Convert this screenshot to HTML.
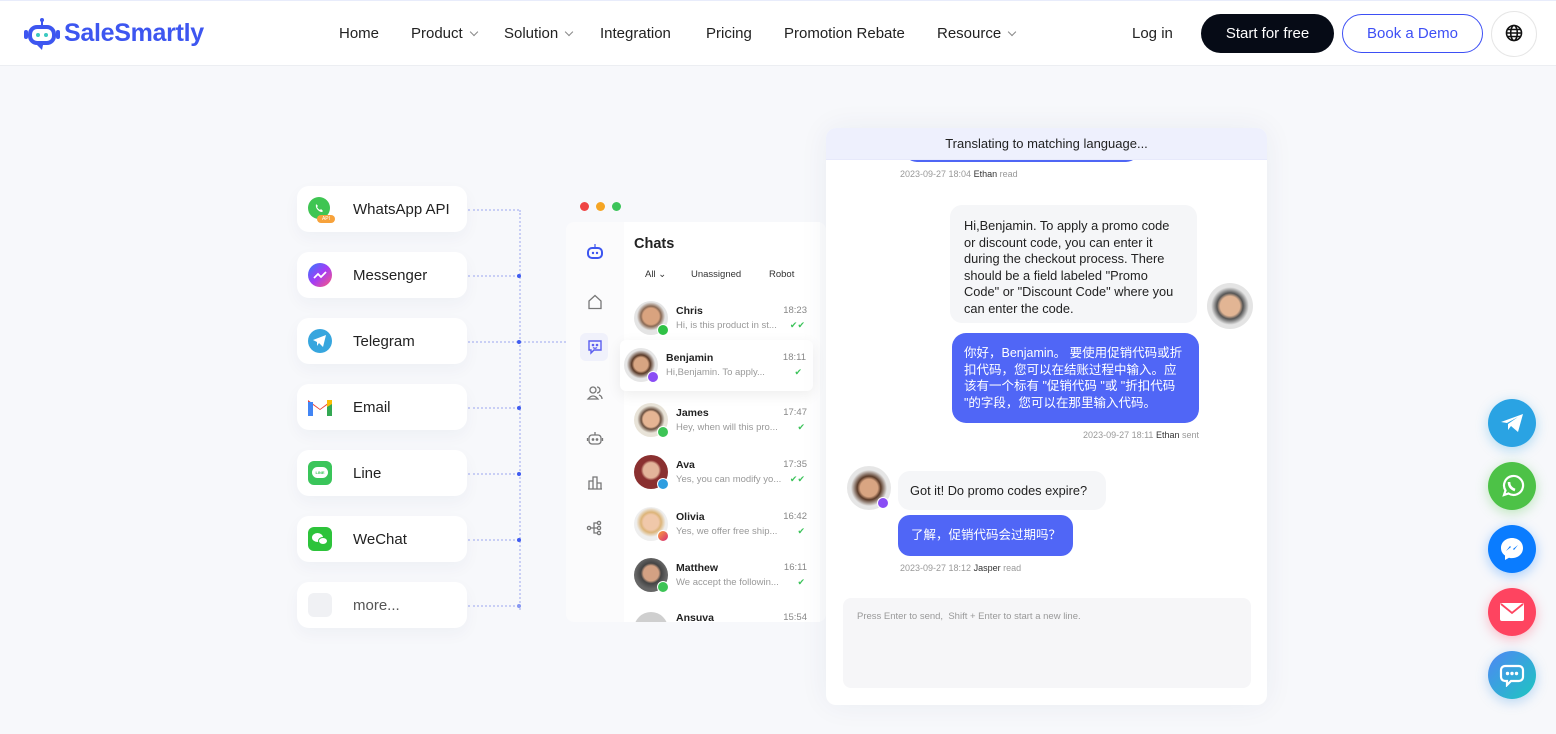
<!DOCTYPE html>
<html><head><meta charset="utf-8">
<style>
*{margin:0;padding:0;box-sizing:border-box}
body{width:1556px;height:734px;overflow:hidden;background:#f7f8fb;font-family:"Liberation Sans","Noto Sans CJK SC",sans-serif;color:#1f2329;position:relative}
.a{position:absolute}
header{position:absolute;left:0;top:0;width:1556px;height:66px;background:#fff;border-top:1px solid #e8ecfb;border-bottom:1px solid #eceef2}
.nav{position:absolute;top:24px;font-size:15px;color:#222}
.car{display:inline-block;width:6px;height:6px;border-right:1.2px solid #888;border-bottom:1.2px solid #888;transform:rotate(45deg);margin-left:8px;position:relative;top:-3px}
.card{position:absolute;left:297px;width:170px;height:46px;background:#fff;border-radius:12px;box-shadow:0 6px 16px rgba(30,40,90,.04)}
.card span{position:absolute;left:56px;top:15px;font-size:15px;color:#222}
.card .ic{position:absolute;left:11px;top:11px;width:24px;height:24px;border-radius:6px}
.hd{position:absolute;height:0;border-top:2px dotted #c9cff5;left:468px;width:51px}
.dot{position:absolute;left:517px;width:4px;height:4px;border-radius:50%;background:#3f5bf0}
.row{position:absolute;left:634px;width:175px;height:40px}
.av{position:absolute;width:34px;height:34px;border-radius:50%;left:0;top:0}
.bd{position:absolute;width:12px;height:12px;border-radius:50%;left:23px;top:23px;border:1.5px solid #fff}
.nm{position:absolute;left:42px;top:0;font-size:10.5px;font-weight:bold;color:#222}
.tm{position:absolute;right:2px;top:0;font-size:9.5px;color:#888}
.ms{position:absolute;left:42px;top:15px;font-size:9.5px;color:#999;white-space:nowrap}
.ck{position:absolute;right:4px;top:14px;font-size:9px;color:#3cc35a}
.fb{position:absolute;left:1488px;width:48px;height:48px;border-radius:50%;display:flex;align-items:center;justify-content:center}
.sb{position:absolute;left:586px;width:18px;height:18px}
</style></head><body>
<header>
 <svg class="a" style="left:23px;top:16px" width="38" height="34" viewBox="0 0 38 34"><circle cx="19" cy="3" r="2" fill="#3d56f0"/><rect x="18" y="3" width="2" height="5" fill="#3d56f0"/><rect x="5" y="8" width="28" height="20" rx="9" fill="#3d56f0"/><rect x="1" y="13" width="4" height="9" rx="2" fill="#3d56f0"/><rect x="33" y="13" width="4" height="9" rx="2" fill="#3d56f0"/><rect x="9" y="12" width="20" height="12" rx="5" fill="#fff"/><circle cx="15" cy="18" r="2" fill="#3cc9c0"/><circle cx="23" cy="18" r="2" fill="#3cc9c0"/><path d="M14 28 L19 33 L20 28Z" fill="#3d56f0"/></svg>
 <div class="a" style="left:64px;top:18px;font-size:25px;font-weight:bold;color:#3d56f0;letter-spacing:-.3px">SaleSmartly</div>
 <div class="nav" style="left:339px">Home</div>
 <div class="nav" style="left:411px">Product<i class="car"></i></div>
 <div class="nav" style="left:504px">Solution<i class="car"></i></div>
 <div class="nav" style="left:600px">Integration</div>
 <div class="nav" style="left:706px">Pricing</div>
 <div class="nav" style="left:784px">Promotion Rebate</div>
 <div class="nav" style="left:937px">Resource<i class="car"></i></div>
 <div class="nav" style="left:1132px">Log in</div>
 <div class="a" style="left:1201px;top:13px;width:133px;height:39px;border-radius:20px;background:#060b16;color:#fff;font-size:15px;text-align:center;line-height:39px">Start for free</div>
 <div class="a" style="left:1342px;top:13px;width:141px;height:39px;border-radius:20px;border:1.3px solid #3d4ff5;color:#3d4ff5;font-size:15px;text-align:center;line-height:37px">Book a Demo</div>
 <div class="a" style="left:1491px;top:10px;width:46px;height:46px;border-radius:50%;border:1px solid #e6e6e6"></div>
 <svg class="a" style="left:1505px;top:23px" width="18" height="18" viewBox="0 0 18 18" fill="none" stroke="#111" stroke-width="1.6"><circle cx="9" cy="9" r="7.5"/><ellipse cx="9" cy="9" rx="3.3" ry="7.5"/><path d="M1.5 9h15M2.5 5.5h13M2.5 12.5h13"/></svg>
</header>

<div class="a" style="left:519px;top:210px;height:400px;border-left:2px dotted #c9cff5"></div>
<div class="hd" style="top:209px"></div><div class="hd" style="top:275px"></div><div class="hd" style="top:341px;width:98px"></div><div class="hd" style="top:407px"></div><div class="hd" style="top:473px"></div><div class="hd" style="top:539px"></div><div class="hd" style="top:605px"></div>
<div class="dot" style="top:274px"></div><div class="dot" style="top:340px"></div><div class="dot" style="top:406px"></div><div class="dot" style="top:472px"></div><div class="dot" style="top:538px"></div><div class="dot" style="top:604px;background:#8797f2"></div>

<div class="card" style="top:186px"><div class="ic" style="border-radius:50%;background:#3fc553;width:22px;height:22px"></div><svg class="a" style="left:16px;top:16px" width="12" height="12" viewBox="0 0 12 12"><path d="M3 2 Q2 6 6 9 Q9 11 10 9 L8 7 L7 8 Q5 7 4 5 L5 4 L3 2Z" fill="#fff"/></svg><div class="a" style="left:20px;top:29px;width:18px;height:8px;border-radius:4px;background:#f7a23b;font-size:5px;color:#fff;text-align:center;line-height:8px">API</div><span>WhatsApp API</span></div>
<div class="card" style="top:252px"><div class="ic" style="border-radius:50%;background:linear-gradient(135deg,#2f7bff,#a33cf5,#ff5a7a)"></div><svg class="a" style="left:16px;top:19px" width="14" height="9"><path d="M1 7 L5 3 L8 6 L13 1" stroke="#fff" stroke-width="1.8" fill="none"/></svg><span>Messenger</span></div>
<div class="card" style="top:318px"><div class="ic" style="border-radius:50%;background:#37a6de"></div><svg class="a" style="left:16px;top:17px" width="14" height="12"><path d="M0 5 L13 0 L10 12 L6 8 L4 11 L4 7Z" fill="#fff"/></svg><span>Telegram</span></div>
<div class="card" style="top:384px"><svg class="a" style="left:11px;top:14px" width="24" height="18"><path d="M0 2 V18 H5 V7 L12 12 L19 7 V18 H24 V2 L12 11Z" fill="#ea4335"/><rect x="0" y="4" width="5" height="14" fill="#4285f4"/><rect x="19" y="4" width="5" height="14" fill="#34a853"/><path d="M19 2 L24 2 L24 6 L19 9Z" fill="#fbbc04"/></svg><span>Email</span></div>
<div class="card" style="top:450px"><div class="ic" style="background:#3ac55a"></div><div class="a" style="left:15px;top:17px;width:16px;height:11px;border-radius:6px;background:#fff;font-size:4px;color:#3ac55a;text-align:center;line-height:11px;font-weight:bold">LINE</div><span>Line</span></div>
<div class="card" style="top:516px"><div class="ic" style="background:#2dc33b"></div><div class="a" style="left:15px;top:17px;width:11px;height:9px;border-radius:50%;background:#fff"></div><div class="a" style="left:21px;top:21px;width:10px;height:8px;border-radius:50%;background:#fff;border:1px solid #2dc33b"></div><span>WeChat</span></div>
<div class="card" style="top:582px"><div class="ic" style="background:#f0f1f4"></div><span style="color:#555">more...</span></div>

<div class="a" style="left:580px;top:202px;width:9px;height:9px;border-radius:50%;background:#ef4444"></div>
<div class="a" style="left:596px;top:202px;width:9px;height:9px;border-radius:50%;background:#f5a524"></div>
<div class="a" style="left:612px;top:202px;width:9px;height:9px;border-radius:50%;background:#3cc45a"></div>
<div class="a" style="left:566px;top:222px;width:260px;height:400px;background:#fbfbfc;border-radius:8px"></div>
<div class="a" style="left:624px;top:222px;width:196px;height:400px;background:#fff"></div>
<svg class="sb" style="top:243px" viewBox="0 0 18 18"><rect x="2" y="5" width="14" height="10" rx="4" fill="none" stroke="#3d56f0" stroke-width="2"/><circle cx="7" cy="10" r="1.2" fill="#3d56f0"/><circle cx="11" cy="10" r="1.2" fill="#3d56f0"/><rect x="8.4" y="1" width="1.2" height="4" fill="#3d56f0"/></svg>
<svg class="sb" style="top:293px" viewBox="0 0 18 18" fill="none" stroke="#777" stroke-width="1.3"><path d="M3 8 L9 2.5 L15 8 V15.5 H3Z"/></svg>
<div class="a" style="left:580px;top:333px;width:28px;height:28px;border-radius:6px;background:#f0f1fb"></div>
<svg class="sb" style="top:338px" viewBox="0 0 18 18" fill="none" stroke="#5b5ef0" stroke-width="1.4"><path d="M3 3 H15 V12 H8 L5 15 V12 H3Z"/><circle cx="7" cy="7" r=".6"/><circle cx="11" cy="7" r=".6"/><path d="M7 9.5 Q9 11 11 9.5"/></svg>
<svg class="sb" style="top:384px" viewBox="0 0 18 18" fill="none" stroke="#777" stroke-width="1.3"><circle cx="7" cy="6" r="3"/><path d="M2 15 Q7 9 12 15Z"/><path d="M11 3 A3 3 0 0 1 11 9 M13 11 Q16 12 16 15"/></svg>
<svg class="sb" style="top:429px" viewBox="0 0 18 18" fill="none" stroke="#777" stroke-width="1.3"><rect x="3" y="6" width="12" height="9" rx="3"/><path d="M9 3 V6 M1.5 9v3 M16.5 9v3"/><circle cx="7" cy="10.5" r=".7"/><circle cx="11" cy="10.5" r=".7"/></svg>
<svg class="sb" style="top:474px" viewBox="0 0 18 18" fill="none" stroke="#777" stroke-width="1.3"><path d="M3 15 V7 H7 V15 M7 15 V3 H11 V15 M11 15 V9 H15 V15 M2 15 H16"/></svg>
<svg class="sb" style="top:519px" viewBox="0 0 18 18" fill="none" stroke="#777" stroke-width="1.3"><circle cx="3" cy="9" r="1.6"/><circle cx="13" cy="4" r="1.6"/><circle cx="13" cy="9" r="1.6"/><circle cx="13" cy="14" r="1.6"/><path d="M4.6 9 H11.4 M8 9 V4 H11.4 M8 9 V14 H11.4"/></svg>
<div class="a" style="left:634px;top:236px;font-size:14.5px;font-weight:bold;color:#222">Chats</div>
<div class="a" style="left:645px;top:269px;font-size:9.5px;color:#333">All ⌄</div>
<div class="a" style="left:691px;top:269px;font-size:9.5px;color:#333">Unassigned</div>
<div class="a" style="left:769px;top:269px;font-size:9.5px;color:#333">Robot</div>
<div class="a" style="left:620px;top:340px;width:193px;height:51px;background:#fff;border-radius:6px;box-shadow:0 4px 14px rgba(0,0,0,.07)"></div>

<div class="row" style="top:301px"><div class="av" style="background:radial-gradient(circle at 50% 45%,#d9a37f 32%,#8a6a55 40%,#e4e4e4 56%)"></div><div class="bd" style="background:#2fc145"></div><div class="nm" style="top:4px">Chris</div><div class="tm" style="top:4px">18:23</div><div class="ms" style="top:19px">Hi, is this product in st...</div><div class="ck" style="top:19px">✔✔</div></div>
<div class="row" style="top:348px;left:624px;width:182px"><div class="av" style="background:radial-gradient(circle at 50% 48%,#d7a582 28%,#5a3a28 38%,#e6e6e6 58%)"></div><div class="bd" style="background:#8a4df5"></div><div class="nm" style="top:4px">Benjamin</div><div class="tm" style="top:4px;right:0">18:11</div><div class="ms" style="top:19px">Hi,Benjamin. To apply...</div><div class="ck" style="top:19px">✔</div></div>
<div class="row" style="top:403px"><div class="av" style="background:radial-gradient(circle at 50% 48%,#e5b594 32%,#6a5040 40%,#e8e3d8 56%)"></div><div class="bd" style="background:#3dc456"></div><div class="nm" style="top:4px">James</div><div class="tm" style="top:4px">17:47</div><div class="ms" style="top:19px">Hey, when will this pro...</div><div class="ck" style="top:19px">✔</div></div>
<div class="row" style="top:455px"><div class="av" style="background:radial-gradient(circle at 50% 45%,#e3b49a 30%,#8a3030 40%)"></div><div class="bd" style="background:#2e9de0"></div><div class="nm" style="top:4px">Ava</div><div class="tm" style="top:4px">17:35</div><div class="ms" style="top:19px">Yes, you can modify yo...</div><div class="ck" style="top:19px">✔✔</div></div>
<div class="row" style="top:507px"><div class="av" style="background:radial-gradient(circle at 50% 45%,#f0c8aa 30%,#dcb478 40%,#eee 58%)"></div><div class="bd" style="background:linear-gradient(135deg,#f9a03a,#d62a7a)"></div><div class="nm" style="top:4px">Olivia</div><div class="tm" style="top:4px">16:42</div><div class="ms" style="top:19px">Yes, we offer free ship...</div><div class="ck" style="top:19px">✔</div></div>
<div class="row" style="top:558px"><div class="av" style="background:radial-gradient(circle at 50% 45%,#d3a183 30%,#444 40%,#666 62%)"></div><div class="bd" style="background:#3dc456"></div><div class="nm" style="top:4px">Matthew</div><div class="tm" style="top:4px">16:11</div><div class="ms" style="top:19px">We accept the followin...</div><div class="ck" style="top:19px">✔</div></div>
<div class="a" style="left:634px;top:608px;width:175px;height:14px;overflow:hidden"><div class="av" style="top:4px;background:#cfcfcf"></div><div class="nm" style="top:4px">Ansuva</div><div class="tm" style="top:4px">15:54</div></div>

<div class="a" style="left:826px;top:128px;width:441px;height:577px;background:#fff;border-radius:10px;box-shadow:0 0 30px rgba(40,50,100,.06);overflow:hidden">
 <div class="a" style="left:77px;top:20px;width:237px;height:14px;border-radius:0 0 14px 14px;background:#4f66f5"></div>
 <div class="a" style="left:0;top:0;width:441px;height:32px;background:#eef0fd;border-bottom:1px solid #e7e9fb;font-size:13px;color:#222;text-align:center;line-height:32px">Translating to matching language...</div>
 <div class="a" style="left:74px;top:41px;font-size:9px;color:#999">2023-09-27 18:04 <b style="color:#333;font-weight:normal">Ethan</b> read</div>
 <div class="a" style="left:124px;top:77px;width:247px;height:118px;background:#f5f6f8;border-radius:12px;padding:13px 14px 0 14px;font-size:12.8px;line-height:16.5px;color:#222">Hi,Benjamin. To apply a promo code or discount code, you can enter it during the checkout process. There should be a field labeled "Promo Code" or "Discount Code" where you can enter the code.</div>
 <div class="a" style="left:381px;top:155px;width:46px;height:46px;border-radius:50%;background:radial-gradient(circle at 50% 50%,#e2b594 30%,#555 40%,#e4e4e4 58%)"></div>
 <div class="a" style="left:126px;top:205px;width:247px;height:90px;background:#5066f6;border-radius:14px;padding:12px 12px;font-size:12.5px;line-height:16.5px;color:#fff">你好，Benjamin。 要使用促销代码或折扣代码，您可以在结账过程中输入。应该有一个标有 "促销代码 "或 "折扣代码 "的字段，您可以在那里输入代码。</div>
 <div class="a" style="left:200px;top:302px;width:173px;text-align:right;font-size:9px;color:#999">2023-09-27 18:11 <span style="color:#333">Ethan</span> sent</div>
 <div class="a" style="left:21px;top:338px;width:44px;height:44px;border-radius:50%;background:radial-gradient(circle at 50% 50%,#d9a582 28%,#5a3a28 38%,#e6e6e6 58%)"></div>
 <div class="a" style="left:51px;top:369px;width:12px;height:12px;border-radius:50%;background:#8a4df5;border:1.5px solid #fff"></div>
 <div class="a" style="left:72px;top:343px;width:208px;height:39px;background:#f5f6f8;border-radius:12px;font-size:12.8px;line-height:39px;padding-left:12px;color:#222">Got it! Do promo codes expire?</div>
 <div class="a" style="left:72px;top:387px;width:175px;height:41px;background:#5066f6;border-radius:12px;font-size:12.5px;line-height:41px;padding-left:13px;color:#fff">了解，促销代码会过期吗？</div>
 <div class="a" style="left:74px;top:435px;font-size:9px;color:#999">2023-09-27 18:12 <span style="color:#333">Jasper</span> read</div>
 <div class="a" style="left:17px;top:470px;width:408px;height:90px;background:#f6f6f8;border-radius:8px;padding:13px 14px;font-size:9.5px;color:#999">Press Enter to send,&nbsp; Shift + Enter to start a new line.</div>
</div>

<div class="fb" style="top:399px;background:#2aa3e3;box-shadow:0 3px 12px rgba(42,163,227,.35)"><svg width="24" height="20" viewBox="0 0 24 20"><path d="M1 9 L23 1 L18 19 L11 13 L8 17 L8 11 L18 4 L7 10Z" fill="#fff"/></svg></div>
<div class="fb" style="top:462px;background:#4dc247;box-shadow:0 3px 12px rgba(77,194,71,.35)"><svg width="26" height="26" viewBox="0 0 26 26" fill="none" stroke="#fff" stroke-width="2.2"><path d="M5 22 L6.5 17.5 A9.5 9.5 0 1 1 9.5 20.5Z"/><path d="M10 9 Q10 15 16 17" stroke-width="2.6"/></svg></div>
<div class="fb" style="top:525px;background:#0a7cff;box-shadow:0 3px 12px rgba(10,124,255,.35)"><svg width="26" height="26" viewBox="0 0 26 26"><path d="M13 2 C6.5 2 2 6.5 2 12 C2 15.2 3.5 17.8 6 19.5 V24 L10 21.7 C11 22 12 22.1 13 22.1 C19.5 22.1 24 17.6 24 12 C24 6.5 19.5 2 13 2Z" fill="#fff"/><path d="M7 15 L11 10 L14 13 L19 9 L15 14 L12 11Z" fill="#0a7cff"/></svg></div>
<div class="fb" style="top:588px;background:#fe4460;box-shadow:0 3px 12px rgba(254,68,96,.35)"><svg width="24" height="18" viewBox="0 0 24 18"><rect x="0" y="0" width="24" height="18" rx="2" fill="#fff"/><path d="M1 1 L12 10 L23 1" stroke="#fe4460" stroke-width="1.8" fill="none"/></svg></div>
<div class="fb" style="top:651px;background:linear-gradient(135deg,#4f86f5,#1cc7c0);box-shadow:0 3px 12px rgba(60,150,230,.35)"><svg width="26" height="24" viewBox="0 0 26 24"><path d="M6 3 H20 A4 4 0 0 1 24 7 V14 A4 4 0 0 1 20 18 H12 L8 22 V18 H6 A4 4 0 0 1 2 14 V7 A4 4 0 0 1 6 3Z" fill="none" stroke="#fff" stroke-width="2.2"/><circle cx="8.5" cy="10.5" r="1.7" fill="#fff"/><circle cx="13" cy="10.5" r="1.7" fill="#fff"/><circle cx="17.5" cy="10.5" r="1.7" fill="#fff"/></svg></div>
</body></html>
